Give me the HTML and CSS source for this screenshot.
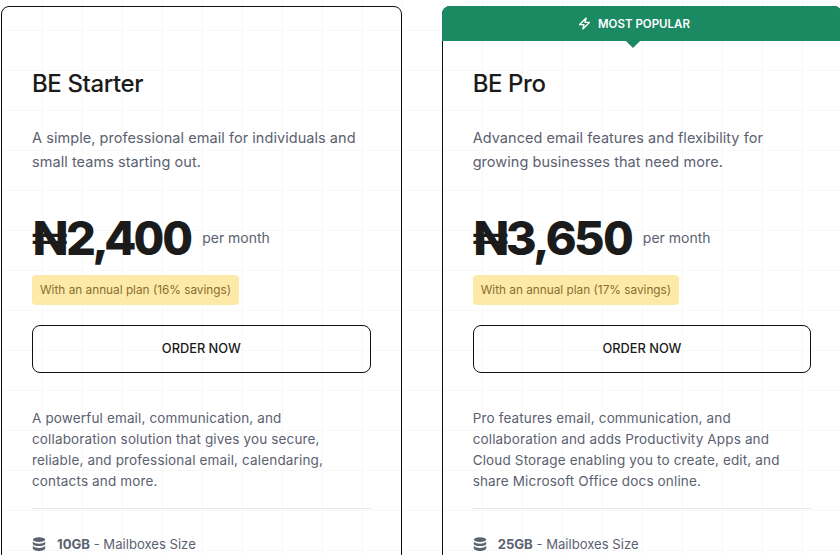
FILE: index.html
```html
<!DOCTYPE html>
<html lang="en">
<head>
<meta charset="utf-8">
<title>Business Email Plans</title>
<link rel="stylesheet" href="styles.css">
</head>
<body>
<main class="pricing">
  <article class="card">
    <div class="card-body card-body-plain">
      <h2 class="plan-name">BE Starter</h2>
      <p class="plan-desc">A simple, professional email for individuals and<br>small teams starting out.</p>
      <div class="price-row"><span class="price">₦2,400</span><span class="period">per month</span></div>
      <span class="savings">With an annual plan (16% savings)</span>
      <a class="order" href="#">ORDER NOW</a>
      <p class="plan-text">A powerful email, communication, and<br>collaboration solution that gives you secure,<br>reliable, and professional email, calendaring,<br>contacts and more.</p>
      <hr class="rule">
      <div class="feature">
        <svg class="db" viewBox="0 0 14 14" aria-hidden="true"><ellipse cx="7" cy="2.6" rx="6.2" ry="2.4"/><path d="M.8 4.6C2 6.2 4.5 6.7 7 6.7s5-.5 6.2-2.1v2.1C13.200 8.300 10 9 7 9S.8 8.300.8 6.700z"/><path d="M.8 8.700C2 10.300 4.500 10.900 7 10.900s5-.6 6.200-2.200v2.600C13.200 13 10 14 7 14S.8 13 .8 11.300z"/></svg>
        <span><b>10GB</b> - Mailboxes Size</span>
      </div>
    </div>
  </article>
  <article class="card">
    <div class="banner">
      <svg class="bolt" viewBox="0 0 24 24" aria-hidden="true"><path d="M15 2 3 14h8l-2 8 12-12h-8z"/></svg>
      <span>MOST POPULAR</span>
    </div>
    <div class="card-body">
      <h2 class="plan-name">BE Pro</h2>
      <p class="plan-desc">Advanced email features and flexibility for<br>growing businesses that need more.</p>
      <div class="price-row"><span class="price">₦3,650</span><span class="period">per month</span></div>
      <span class="savings">With an annual plan (17% savings)</span>
      <a class="order" href="#">ORDER NOW</a>
      <p class="plan-text">Pro features email, communication, and<br>collaboration and adds Productivity Apps and<br>Cloud Storage enabling you to create, edit, and<br>share Microsoft Office docs online.</p>
      <hr class="rule">
      <div class="feature">
        <svg class="db" viewBox="0 0 14 14" aria-hidden="true"><ellipse cx="7" cy="2.6" rx="6.2" ry="2.4"/><path d="M.8 4.6C2 6.2 4.5 6.7 7 6.7s5-.5 6.2-2.1v2.1C13.200 8.300 10 9 7 9S.8 8.300.8 6.700z"/><path d="M.8 8.700C2 10.300 4.500 10.900 7 10.900s5-.6 6.200-2.200v2.600C13.200 13 10 14 7 14S.8 13 .8 11.300z"/></svg>
        <span><b>25GB</b> - Mailboxes Size</span>
      </div>
    </div>
  </article>
</main>
</body>
</html>
```
FILE: styles.css
```css
* { box-sizing: border-box; }
html, body { margin: 0; height: 555px; overflow: hidden; }
body {
  font-family: Inter, "Open Sans", sans-serif;
  color: #1b1b1b;
  background-color: #fff;
  background-image:
    linear-gradient(to right, #f8f8f8 1px, transparent 1px),
    linear-gradient(to bottom, #f8f8f8 1px, transparent 1px);
  background-size: 40px 40px;
  background-position: 2px 30px;
}
.pricing {
  display: grid;
  grid-template-columns: 400.67px 400.67px;
  column-gap: 40px;
  margin-left: 1px;
  padding-top: 6px;
  width: 860px;
  align-items: start;
}
.card {
  border: 1px solid #111;
  border-radius: 8px;
  height: 640px;
}
.card-body { padding: 25px 30px 0; }
.card-body-plain { padding-top: 59px; }
.banner {
  position: relative;
  display: flex;
  align-items: center;
  justify-content: center;
  gap: 7px;
  height: 35px;
  margin: -1px -1px 0;
  padding-right: 16px;
  border-radius: 8px 8px 0 0;
  background: #1b8a62;
  color: #fff;
  font-size: 11.500px;
  font-weight: 600;
}
.banner::after {
  content: "";
  position: absolute;
  left: 50%;
  bottom: -5px;
  width: 10px;
  height: 10px;
  margin-left: -14px;
  background: #1b8a62;
  transform: rotate(45deg);
}
.bolt { width: 13px; height: 13px; fill: none; stroke: #fff; stroke-width: 2.600; stroke-linejoin: round; stroke-linecap: round; }
.plan-name {
  margin: 0;
  font-size: 24px;
  line-height: 36px;
  font-weight: 450;
  letter-spacing: -.4px;
  color: #1b1b1b;
}
.plan-desc {
  margin: 24px 0 0;
  font-size: 14.500px;
  letter-spacing: .05px;
  line-height: 24px;
  color: #5b6170;
}
.price-row {
  display: flex;
  align-items: center;
  gap: 11px;
  margin-top: 33px;
  height: 60px;
}
.price {
  font-size: 47px;
  font-weight: 800;
  font-variant-numeric: tabular-nums;
  letter-spacing: -1.700px;
  color: #1b1b1b;
}
.period { font-size: 14px; color: #5b6170; }
.savings {
  display: inline-block;
  margin-top: 8px;
  padding: 0 8px;
  height: 30px;
  line-height: 30px;
  border-radius: 4px;
  background: #fdeaa8;
  color: #8a6d2f;
  font-size: 11.800px;
}
.order {
  display: block;
  height: 48px;
  margin-top: 20px;
  line-height: 46px;
  text-align: center;
  border: 1px solid #111;
  border-radius: 8px;
  color: #1b1b1b;
  font-size: 12.800px;
  font-weight: 450;
  text-decoration: none;
}
.plan-text {
  margin: 35px 0 0;
  font-size: 13.500px;
  letter-spacing: .15px;
  line-height: 21px;
  color: #5b6170;
}
.rule { margin: 16px 0 0; border: 0; border-top: 1px solid #e8e8e8; }
.feature {
  display: flex;
  align-items: center;
  gap: 11px;
  margin-top: 27px;
  font-size: 13.100px;
  line-height: 16px;
  color: #5b6170;
}
.feature b { font-weight: 700; }
.db { width: 14px; height: 14px; fill: #5b6170; }
```
